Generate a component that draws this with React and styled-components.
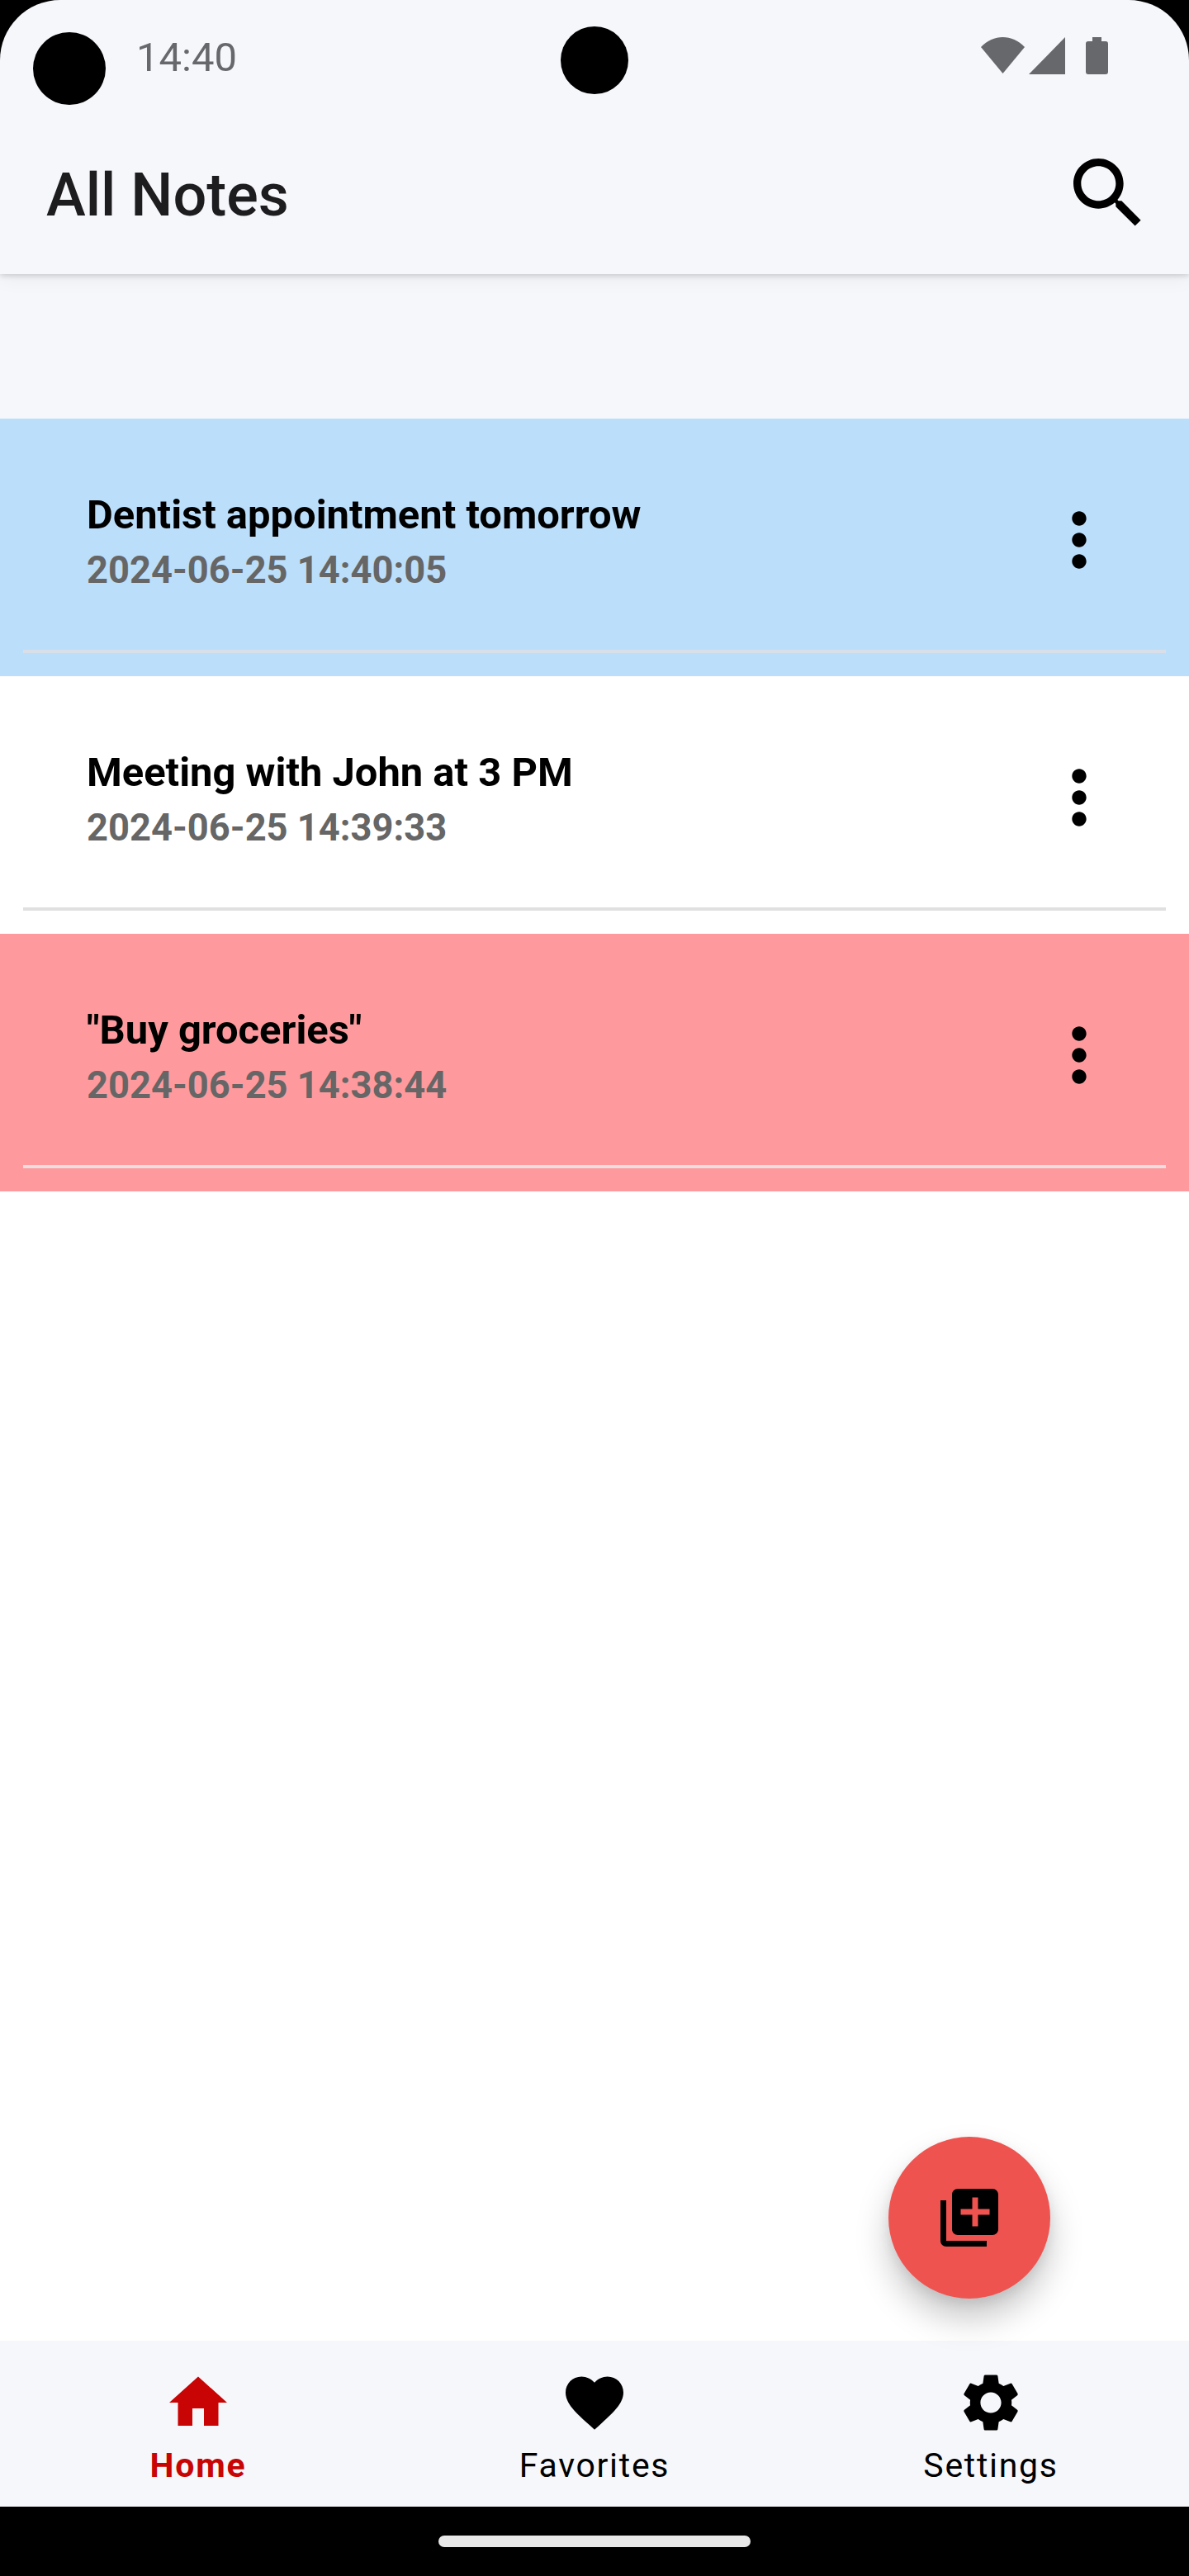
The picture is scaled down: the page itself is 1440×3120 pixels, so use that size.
import React from "react";
import styled, { createGlobalStyle } from "styled-components";

const GlobalStyle = createGlobalStyle`
html, body {
  margin: 0;
  padding: 0;
  background: #000;
  font-family: Roboto, "Liberation Sans", sans-serif;
}
`

const Phone = styled.div`
position: relative;
width: 1440px;
height: 3120px;
display: flex;
flex-direction: column;
overflow: hidden;
background: #000;
`

const Header = styled.header`
position: relative;
z-index: 2;
height: 332px;
flex: none;
background: #f6f7fb;
border-radius: 73px 73px 0 0;
box-shadow: 0 2px 6px rgba(0, 0, 0, 0.16), 0 6px 24px rgba(0, 0, 0, 0.05);
`

const StatusBar = styled.div`
height: 140px;
padding: 41px 98px 0 165px;
box-sizing: border-box;
display: flex;
justify-content: space-between;
align-items: flex-start;
`

const Clock = styled.span`
font-size: 49px;
line-height: 58px;
color: #66686c;
`

const StatusIcons = styled.div`
display: flex;
align-items: flex-start;
padding-top: 4px;
`

const Camera = styled.div`
position: absolute;
width: ${({size}) => size}px;
height: ${({size}) => size}px;
left: ${({x}) => x}px;
top: ${({y}) => y}px;
border-radius: 50%;
background: #000;
`

const Toolbar = styled.div`
height: 192px;
padding: 0 58px 0 56px;
display: flex;
justify-content: space-between;
align-items: flex-start;
box-sizing: border-box;
`

const Title = styled.h1`
margin: 55px 0 0;
font-size: 72px;
line-height: 84px;
font-weight: 500;
color: #1d1d20;
`

const SearchIcon = styled.svg`
width: 112px;
height: 112px;
margin-top: 38px;
margin-right: -16px;
`

const Content = styled.main`
flex: 1;
display: flex;
flex-direction: column;
background: #fff;
`

const TopSpace = styled.div`
height: 175px;
background: #f6f7fb;
`

const Row = styled.div`
height: 312px;
padding: 89px 28px 28px;
box-sizing: border-box;
display: flex;
flex-direction: column;
background: ${({tint}) => tint};
`

const RowBody = styled.div`
flex: 1;
display: flex;
justify-content: space-between;
padding-left: 77px;
`

const RowText = styled.div`
display: flex;
flex-direction: column;
`

const NoteTitle = styled.div`
font-size: 48.9px;
line-height: 56px;
font-weight: 700;
color: #000;
`

const NoteDate = styled.div`
margin-top: 12px;
font-size: 45.3px;
line-height: 54px;
font-weight: 700;
color: #666;
`

const MoreIcon = styled.svg`
width: 104px;
height: 104px;
margin: 6px 53px 0 0;
`

const Divider = styled.div`
height: 4px;
background: ${({color}) => color};
`

const Fab = styled.button`
position: absolute;
left: 1076px;
top: 2588px;
width: 196px;
height: 196px;
padding: 0;
border: 0;
border-radius: 50%;
background: #ef5350;
display: flex;
align-items: center;
justify-content: center;
box-shadow: 0 24px 40px rgba(0, 0, 0, 0.22), 0 6px 14px rgba(0, 0, 0, 0.08);
`

const FabIcon = styled.svg`
width: 84px;
height: 84px;
`

const BottomNav = styled.nav`
height: 201px;
flex: none;
display: grid;
grid-template-columns: repeat(3, 1fr);
background: #f6f7fb;
`

const Tab = styled.div`
display: flex;
flex-direction: column;
align-items: center;
color: ${({active}) => (active ? "#c80404" : "#000")};
`

const TabIcon = styled.svg`
width: 84px;
height: 84px;
margin-top: 33px;
fill: currentColor;
`

const TabLabel = styled.span`
margin-top: 10px;
font-size: 41px;
line-height: 48px;
letter-spacing: ${({active}) => (active ? "1.8px" : "1.7px")};
font-weight: ${({active}) => (active ? 700 : 400)};
`

const GestureArea = styled.div`
height: 84px;
flex: none;
display: flex;
justify-content: center;
padding-top: 35px;
box-sizing: border-box;
background: #000;
`

const GesturePill = styled.div`
width: 378px;
height: 14px;
border-radius: 7px;
background: #e8e8e8;
`

const notes = [
  { title: "Dentist appointment tomorrow", date: "2024-06-25 14:40:05", tint: "#bbdefb", line: "#d9dfe9" },
  { title: "Meeting with John at 3 PM", date: "2024-06-25 14:39:33", tint: "#fff", line: "#e0e0e0" },
  { title: "\"Buy groceries\"", date: "2024-06-25 14:38:44", tint: "#fe9a9e", line: "#ecdede" },
]

const tabs = [
  { label: "Home", active: true, path: "M10 20v-6h4v6h5v-8h3L12 3 2 12h3v8z" },
  { label: "Favorites", path: "M12 21.35l-1.45-1.32C5.4 15.36 2 12.28 2 8.5 2 5.42 4.42 3 7.5 3c1.74 0 3.41.81 4.5 2.09C13.09 3.81 14.76 3 16.5 3 19.58 3 22 5.42 22 8.5c0 3.78-3.4 6.86-8.55 11.54L12 21.35z" },
  { label: "Settings", path: "M19.14 12.94c.04-.3.06-.61.06-.94 0-.32-.02-.64-.07-.94l2.03-1.58c.18-.14.23-.41.12-.61l-1.92-3.32c-.12-.22-.37-.29-.59-.22l-2.39.96c-.5-.38-1.03-.7-1.62-.94l-.36-2.54c-.04-.24-.24-.41-.48-.41h-3.84c-.24 0-.43.17-.47.41l-.36 2.54c-.59.24-1.13.57-1.62.94l-2.39-.96c-.22-.08-.47 0-.59.22L2.74 8.87c-.12.21-.08.47.12.61l2.03 1.58c-.05.3-.09.63-.09.94s.02.64.07.94l-2.03 1.58c-.18.14-.23.41-.12.61l1.92 3.32c.12.22.37.29.59.22l2.39-.96c.5.38 1.03.7 1.62.94l.36 2.54c.05.24.24.41.48.41h3.84c.24 0 .44-.17.47-.41l.36-2.54c.59-.24 1.13-.56 1.62-.94l2.39.96c.22.08.47 0 .59-.22l1.92-3.32c.12-.22.07-.47-.12-.61l-2.01-1.58zM12 15.6c-1.98 0-3.6-1.62-3.6-3.6s1.62-3.6 3.6-3.6 3.6 1.62 3.6 3.6-1.62 3.6-3.6 3.6z" },
]

export default function App() {
  return (
    <Phone>
      <GlobalStyle/>
      <Header>
        <StatusBar>
          <Clock>14:40</Clock>
          <StatusIcons>
            <svg width="154" height="45" viewBox="0 0 154 45" fill="#66686c">
              <path d="M0 12 C15 -4 38 -4 53 12 L26.5 44 Z"/>
              <path d="M58 45 L102 0 V45 Z"/>
              <path d="M135 0 H146 V5 H151 a3 3 0 0 1 3 3 V42 a3 3 0 0 1 -3 3 H130 a3 3 0 0 1 -3 -3 V8 a3 3 0 0 1 3 -3 H135 Z"/>
            </svg>
          </StatusIcons>
        </StatusBar>
        <Camera size={88} x={40} y={39}/>
        <Camera size={82} x={679} y={32}/>
        <Toolbar>
          <Title>All Notes</Title>
          <SearchIcon viewBox="0 0 24 24" fill="#000">
            <path d="M15.5 14h-.79l-.28-.27C15.41 12.59 16 11.11 16 9.5 16 5.91 13.09 3 9.5 3S3 5.91 3 9.5 5.91 16 9.5 16c1.61 0 3.09-.59 4.23-1.57l.27.28v.79l5 4.99L20.49 19l-4.99-5zm-6 0C7.01 14 5 11.99 5 9.5S7.01 5 9.5 5 14 7.01 14 9.5 11.99 14 9.5 14z"/>
          </SearchIcon>
        </Toolbar>
      </Header>
      <Content>
        <TopSpace/>
        {notes.map((note) => (
          <Row key={note.date} tint={note.tint}>
            <RowBody>
              <RowText>
                <NoteTitle>{note.title}</NoteTitle>
                <NoteDate>{note.date}</NoteDate>
              </RowText>
              <MoreIcon viewBox="0 0 24 24" fill="#000">
                <path d="M12 8c1.1 0 2-.9 2-2s-.9-2-2-2-2 .9-2 2 .9 2 2 2zm0 2c-1.1 0-2 .9-2 2s.9 2 2 2 2-.9 2-2-.9-2-2-2zm0 6c-1.1 0-2 .9-2 2s.9 2 2 2 2-.9 2-2-.9-2-2-2z"/>
              </MoreIcon>
            </RowBody>
            <Divider color={note.line}/>
          </Row>
        ))}
      </Content>
      <Fab>
        <FabIcon viewBox="0 0 24 24" fill="#000">
          <path d="M4 6H2v14c0 1.1.9 2 2 2h14v-2H4V6zm16-4H8c-1.1 0-2 .9-2 2v12c0 1.1.9 2 2 2h12c1.1 0 2-.9 2-2V4c0-1.1-.9-2-2-2zm-1 9h-4v4h-2v-4H9V9h4V5h2v4h4v2z"/>
        </FabIcon>
      </Fab>
      <BottomNav>
        {tabs.map((tab) => (
          <Tab key={tab.label} active={tab.active}>
            <TabIcon viewBox="0 0 24 24"><path d={tab.path}/></TabIcon>
            <TabLabel active={tab.active}>{tab.label}</TabLabel>
          </Tab>
        ))}
      </BottomNav>
      <GestureArea>
        <GesturePill/>
      </GestureArea>
    </Phone>
  )
}
